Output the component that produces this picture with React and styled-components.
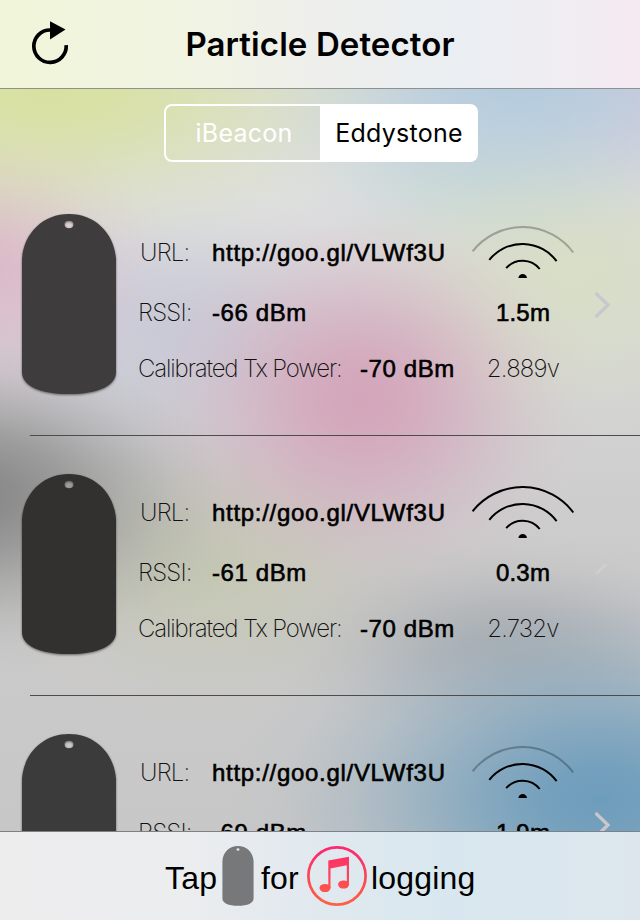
import React, { useState } from "react";
import styled, { createGlobalStyle, css } from "styled-components";

const beacons = [
  { id: 1, url: "http://goo.gl/VLWf3U", rssi: -66, tx: -70, distance: "1.5m", volts: "2.889v", bars: 2, tint: "#3e3c3d" },
  { id: 2, url: "http://goo.gl/VLWf3U", rssi: -61, tx: -70, distance: "0.3m", volts: "2.732v", bars: 3, faded: true, tint: "#323130" },
  { id: 3, url: "http://goo.gl/VLWf3U", rssi: -69, distance: "1.9m", bars: 2, tint: "#3b3b3b" },
];

// soft colour spot that fades out without a visible edge
const spot = (x, y, rx, ry, rgb, a = 1) =>
  `radial-gradient(ellipse ${rx}px ${ry}px at ${x}px ${y}px, ${[
    [1, 0],
    [0.92, 15],
    [0.72, 32],
    [0.45, 50],
    [0.2, 68],
    [0.05, 85],
    [0, 100],
  ]
    .map(([o, stop]) => `rgba(${rgb}, ${(o * a).toFixed(3)}) ${stop}%`)
    .join(", ")})`;

const backdrop = [
  spot(50, 85, 400, 185, "216, 225, 160"),
  spot(520, 75, 320, 190, "180, 203, 221"),
  spot(670, 80, 160, 150, "220, 200, 220"),
  spot(-20, 265, 200, 170, "220, 180, 197", 0.85),
  spot(362, 400, 235, 210, "212, 163, 185", 0.95),
  spot(570, 270, 260, 210, "216, 222, 198", 0.95),
  spot(480, 180, 190, 100, "200, 218, 216", 0.7),
  spot(170, 330, 220, 150, "197, 199, 215", 0.75),
  spot(-30, 495, 300, 180, "136, 136, 136"),
  spot(210, 570, 240, 160, "196, 199, 174", 0.75),
  spot(600, 800, 370, 230, "110, 157, 188"),
  spot(500, 640, 260, 110, "164, 168, 172", 0.7),
  "linear-gradient(#dfe0e0 0px, #dedfe0 200px, #d3d2d4 400px, #cccbcb 560px, #c6c6c6 920px)",
].join(",\n");

const TagShape = ({ fill }) => (
  <svg viewBox="0 0 94 181" width="100%" height="100%">
    <path
      fillRule="evenodd"
      fill={fill}
      d="M0 45C2 18 22 0 47 0S92 18 94 45V158C94 172 76 180 47 180S0 172 0 158ZM42.500 10.500a4.500 3.700 0 1 0 9 0a4.500 3.700 0 1 0 -9 0Z"
    />
  </svg>
);

const Signal = ({ bars }) => (
  <svg width="104" height="54" viewBox="0 0 104 54" fill="none" stroke="#000" strokeWidth="2">
    <path d="M0.600 25.300A63.500 63.500 0 0 1 101.300 26.500" opacity={bars > 2 ? 1 : 0.27} />
    <path d="M17.300 33.800A42.500 42.500 0 0 1 84.600 35.200" />
    <path d="M34.200 42.200A21.800 21.800 0 0 1 67.700 43" />
    <path d="M46.300 52C47 46.800 54.500 46.800 55 52Z" fill="#000" stroke="none" />
  </svg>
);

const Chevron = ({ faded }) => (
  <svg width="16" height="28" viewBox="0 0 16 28" fill="none">
    {faded ? (
      <path d="M1 23L11 13.500" stroke="#fff" strokeOpacity="0.13" strokeWidth="3" />
    ) : (
      <path d="M0.500 2L13 14L0.500 26" stroke="#c7c7cc" strokeWidth="3.300" />
    )}
  </svg>
);

const App = () => {
  const [mode, setMode] = useState("Eddystone");

  return (
    <Screen>
      <GlobalStyle />
      <Header>
        <RefreshBtn aria-label="Refresh">
          <svg width="38" height="44" viewBox="0 0 38 44">
            <path d="M18 8A16.200 16.200 0 1 0 34.200 23.200" fill="none" stroke="#000" strokeWidth="3.700" />
            <path d="M18 -0.800L33.500 7.400L18 17.500Z" />
          </svg>
        </RefreshBtn>
        <Title>Particle Detector</Title>
      </Header>

      <Content>
        <Segments>
          {["iBeacon", "Eddystone"].map((name) => (
            <Segment key={name} $active={mode === name} onClick={() => setMode(name)}>
              {name}
            </Segment>
          ))}
        </Segments>

        {beacons.map((beacon) => (
          <Row key={beacon.id}>
            <Tag>
              <TagShape fill={beacon.tint} />
            </Tag>
            <Info>
              <Line>
                <Label $width={74} $indent={2}>URL:</Label>
                <Value $spacing={0.7}>{beacon.url}</Value>
              </Line>
              <Line>
                <Label $width={74}>RSSI:</Label>
                <Value>{beacon.rssi} dBm</Value>
              </Line>
              {beacon.tx && (
                <Line>
                  <Label $width={222} $spacing={-1.13}>Calibrated Tx Power:</Label>
                  <Value>{beacon.tx} dBm</Value>
                </Line>
              )}
            </Info>
            <Range>
              <Signal bars={beacon.bars} />
              <Distance>{beacon.distance}</Distance>
              {beacon.volts && <Volts>{beacon.volts}</Volts>}
            </Range>
            <Arrow>
              <Chevron faded={beacon.faded} />
            </Arrow>
          </Row>
        ))}
      </Content>

      <Footer>
        <FooterText $width={57}>Tap</FooterText>
        <SmallTag>
          <TagShape fill="#767879" />
        </SmallTag>
        <FooterText $width={46}>for</FooterText>
        <Music />
        <FooterText $width={112} $gap={4}>logging</FooterText>
      </Footer>
    </Screen>
  );
};

const Music = () => (
  <svg width="60" height="60" viewBox="0 0 60 60">
    <defs>
      <linearGradient id="music" gradientUnits="userSpaceOnUse" x1="0" y1="0" x2="0" y2="60">
        <stop offset="0" stopColor="#fb2770" />
        <stop offset="1" stopColor="#fe6240" />
      </linearGradient>
    </defs>
    <circle cx="30" cy="30" r="28.600" fill="none" stroke="url(#music)" strokeWidth="2.700" />
    <g fill="url(#music)">
      <path d="M21.300 14.500L42 10.800V37H39.800V19.300L23.500 22.400V42H21.300Z" />
      <ellipse cx="18" cy="42" rx="5.500" ry="4.100" />
      <ellipse cx="36.600" cy="38.500" rx="5.500" ry="4.100" />
    </g>
  </svg>
);

const GlobalStyle = createGlobalStyle`
  body {
    margin: 0;
  }
  * {
    box-sizing: border-box;
  }
`;

const thin = css`
  font-family: "Inter", sans-serif;
  font-weight: 200;
  color: #111;
`;

const medium = css`
  font-family: "Liberation Sans", Arial, sans-serif;
  -webkit-text-stroke: 0.6px #000;
  color: #000;
`;

const Screen = styled.div`
  width: 640px;
  height: 920px;
  overflow: hidden;
  display: flex;
  flex-direction: column;
  background: ${backdrop};
`;

const Header = styled.header`
  flex: none;
  height: 89px;
  display: grid;
  grid-template-columns: 80px 1fr 80px;
  align-items: center;
  background: linear-gradient(90deg, #f1f5d9 0%, #f1f4e2 28%, #eeefec 50%, #eaeef2 72%, #f0edf3 88%, #f5eaf1 100%);
  border-bottom: 1px solid #8f9190;
`;

const RefreshBtn = styled.button`
  height: 44px;
  border: 0;
  padding: 0 0 0 32px;
  background: none;
  display: flex;

  svg {
    overflow: visible;
  }
`;

const Title = styled.h1`
  margin: 0;
  text-align: center;
  white-space: nowrap;
  font: 600 33px/40px "Inter", sans-serif;
  letter-spacing: 0.1px;
`;

const Content = styled.main`
  flex: none;
  height: 742px;
  overflow: hidden;
  padding-top: 15px;
`;

const Segments = styled.div`
  width: 314px;
  height: 58px;
  margin: 0 0 14px 164px;
  display: grid;
  grid-template-columns: 154px 1fr;
  border: 2px solid #fff;
  border-radius: 8px;
`;

const Segment = styled.button`
  border: 0;
  padding: 0 0 0 2px;
  font: 400 25px/30px "Inter", sans-serif;
  letter-spacing: 0.25px;
  background: ${(p) => (p.$active ? "#fff" : "transparent")};
  color: ${(p) => (p.$active ? "#000" : "#fff")};
`;

const Row = styled.div`
  height: 260px;
  padding: 38px 0 0 22px;
  display: flex;
  background: linear-gradient(#4c4c4c, #4c4c4c) 30px 259px / 610px 1px no-repeat;
`;

const Tag = styled.div`
  flex: none;
  width: 94px;
  height: 181px;
  filter: drop-shadow(0 1.500px 1px rgba(0, 0, 0, 0.5));
`;

const Info = styled.div`
  width: 334px;
  padding: 25px 0 0 22px;
  display: grid;
  grid-template-rows: 60px 56px 28px;
`;

const Line = styled.div`
  display: flex;
  font-size: 24px;
  line-height: 28px;
  white-space: nowrap;
`;

const Label = styled.span`
  ${thin}
  flex: none;
  width: ${(p) => p.$width}px;
  padding-left: ${(p) => p.$indent || 0}px;
  letter-spacing: ${(p) => p.$spacing || -0.8}px;
`;

const Value = styled.span`
  ${medium}
  letter-spacing: ${(p) => p.$spacing || 0.6}px;
`;

const Range = styled.div`
  width: 145px;
  padding: 12px 0 0 22px;
  font-size: 24px;
  line-height: 28px;

  svg {
    display: block;
  }
`;

const Distance = styled.div`
  ${medium}
  width: 102px;
  margin-top: 19px;
  text-align: center;
  letter-spacing: 0.2px;
`;

const Volts = styled.div`
  ${thin}
  width: 102px;
  margin-top: 28px;
  text-align: center;
  letter-spacing: -0.8px;
`;

const Arrow = styled.div`
  padding-top: 77px;
`;

const Footer = styled.footer`
  flex: none;
  height: 89px;
  padding: 14px 0 0 165px;
  display: flex;
  border-top: 1px solid #7d8287;
  background: linear-gradient(90deg, #ededee 0%, #ecedef 28%, #e2e9ef 47%, #d8e7ef 70%, #dde6ed 100%);
`;

const FooterText = styled.span`
  flex: none;
  width: ${(p) => p.$width}px;
  padding-left: ${(p) => p.$gap || 0}px;
  font: 32px/64px "Liberation Sans", Arial, sans-serif;
  letter-spacing: 0.2px;
  white-space: nowrap;
`;

const SmallTag = styled.div`
  width: 32px;
  height: 60px;
  margin-right: 7px;
`;

export default App;
